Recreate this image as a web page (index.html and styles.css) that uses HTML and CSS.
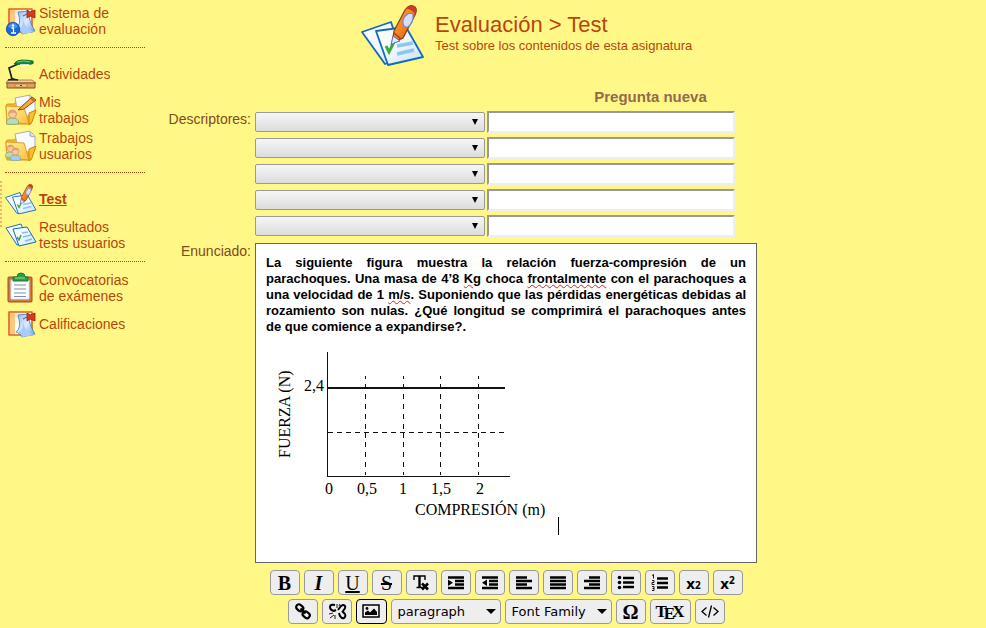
FILE: index.html
```html
<!DOCTYPE html>
<html lang="es">
<head>
<meta charset="utf-8">
<title>Evaluación &gt; Test</title>
<link rel="stylesheet" href="styles.css">
</head>
<body>
<svg class="defs" aria-hidden="true">
  <defs>
    <linearGradient id="gPaper" x1="0" y1="0" x2="1" y2="1"><stop offset="0" stop-color="#fff"/><stop offset=".5" stop-color="#eef7ff"/><stop offset="1" stop-color="#c3e2fb"/></linearGradient>
    <linearGradient id="gPen" x1="0" y1="0" x2="1" y2="1"><stop offset="0" stop-color="#ffb04a"/><stop offset=".5" stop-color="#f58220"/><stop offset="1" stop-color="#b8480c"/></linearGradient>
    <linearGradient id="gFolder" x1="0" y1="0" x2="1" y2="1"><stop offset="0" stop-color="#fff0a8"/><stop offset="1" stop-color="#fbc13a"/></linearGradient>
    <linearGradient id="gBoard" x1="0" y1="0" x2="1" y2="1"><stop offset="0" stop-color="#ffd79c"/><stop offset=".5" stop-color="#fff"/><stop offset="1" stop-color="#ffe4bd"/></linearGradient>
    <linearGradient id="gNote" x1="0" y1="0" x2="1" y2="1"><stop offset="0" stop-color="#8ab8f2"/><stop offset=".5" stop-color="#dcebff"/><stop offset="1" stop-color="#5c9ae8"/></linearGradient>
  </defs>
  <symbol id="sheets" viewBox="0 0 64 62">
    <path d="M1 28 30 18l12 36-18 6z" fill="url(#gPaper)" stroke="#1469b8" stroke-width="1.8" stroke-linejoin="round"/>
    <path d="M15 27 45 23l17 30-35 8z" fill="url(#gPaper)" stroke="#1469b8" stroke-width="1.8" stroke-linejoin="round"/>
    <path d="M36 42l16-3M36 50l17-4" stroke="#90c6f2" stroke-width="3.5" fill="none"/>
    <path d="M25 42l3 6 5-10" stroke="#35ad35" stroke-width="2.8" fill="none"/>
  </symbol>
  <symbol id="pen" viewBox="0 0 64 62">
    <path d="M33 27 44 6q5-7 10-3 3 3-1 10L42 34l-9 4-2 2z" fill="url(#gPen)" stroke="#8c3a12" stroke-width="1.2"/>
    <path d="M45 5q4-6 9-2 3 3 0 7-3-5-9-5z" fill="#cf3a22"/>
    <path d="M42 16q4-9 10-6 1 8-5 13-6 1-5-7z" fill="#d6defa" stroke="#7484c4" stroke-width="1.2"/>
    <path d="M32 32l7 5-6 2-3 2z" fill="#e7e7fa" stroke="#5b6fa6"/>
    <path d="M33 29l7 6" stroke="#9c4210" stroke-width="1.5"/>
  </symbol>
  <symbol id="sheets-small" viewBox="0 0 32 26">
    <path d="M1 6 16 2l7 17-11 4z" fill="url(#gPaper)" stroke="#1a70bd"/>
    <path d="M8 7l14-2 9 15-17 4z" fill="url(#gPaper)" stroke="#1469b8"/>
    <path d="M17 11l6-1M18 15l8-2M20 19l7-2" stroke="#86bbea" stroke-width="1.5"/>
    <path d="M12 15l2 3 2-5" stroke="#35ad35" stroke-width="1.5" fill="none"/>
  </symbol>
  <symbol id="folder" viewBox="0 0 32 32">
    <path d="M1 12q0-2 2-2h6l2-2h6l2 4h10v6l-3 12H2z" fill="#f5b931" stroke="#d9941a"/>
    <path d="M10 4l15-3 5 5v14l-16 4z" fill="#f8faff" stroke="#a9adb8"/>
    <path d="M25 1v5l5 1" fill="#d7e1f4" stroke="#a9adb8"/>
    <path d="M1 12l18 1 5 17-22-2z" fill="url(#gFolder)" stroke="#e0a020"/>
    <path d="M24 19l7-3-4 12-3 3z" fill="#fbbd31" stroke="#cf8710"/>
  </symbol>
  <symbol id="board" viewBox="0 0 32 32">
    <path d="M4 4h23v23H4z" fill="url(#gBoard)" stroke="#d9641a" stroke-width="1.6" stroke-linejoin="round"/>
    <path d="M5 5h5v21H5z" fill="#ffc680"/>
    <path d="M13 7l11-1q-1 9 6 20l-13 3q0-3-6-5 6-4 2-17z" fill="url(#gNote)" stroke="#3e79c7" stroke-width=".8"/>
    <path d="M11 24q7 0 7-9 3 10 12 12l-13 2q0-4-6-5z" fill="#a8ccf8"/>
    <path d="M22 5l3 2 5-2v8l-5-2-3 2z" fill="#d93b1b" stroke="#9a1c0d" stroke-width=".8"/>
    <path d="M22 9l-4 2" stroke="#555"/>
  </symbol>
  <symbol id="info" viewBox="0 0 32 32">
    <circle cx="8" cy="24" r="6.700" fill="#1769dc" stroke="#0b47a5" stroke-width=".8"/>
    <path d="M3 22q2-4 5-4t5 4q-5 2-10 0z" fill="#4f93f2"/>
    <circle cx="8" cy="20.500" r="1.200" fill="#fff"/><path d="M6.500 23H8.500v5M6 28h5" stroke="#fff" stroke-width="1.300" fill="none"/>
  </symbol>
  <symbol id="lamp" viewBox="0 0 32 32">
    <path d="M3 22h24l4 3H1z" fill="#f6d09c" stroke="#a7652a" stroke-width=".8"/>
    <path d="M2 25h28v5H2z" fill="#dda05e" stroke="#8d501e"/>
    <path d="M10 26h12v3H10z" fill="#f3c78b" stroke="#a7652a" stroke-width=".6"/><path d="M15 27.500h2" stroke="#713b0b"/>
    <path d="M13 6 4 10l3 11" fill="none" stroke="#18242b" stroke-width="1.700"/>
    <path d="M3 22q4-3 10 0z" fill="#18242b" stroke="#18242b"/>
    <path d="M9 6q2-4 8-4t11 1q1 3-1 3-9 1-18 0z" fill="#14883b" stroke="#086029" stroke-width=".8"/>
    <path d="M12 4q7-2 13 0" stroke="#6dce87" fill="none"/>
    <path d="M15 7h9" stroke="#fff" stroke-width="1.500"/>
  </symbol>
  <symbol id="person" viewBox="0 0 12 16">
    <path d="M0 15v-3q1-3 6-3t6 3v3q-6 1-12 0z" fill="currentColor" stroke="#6f9278" stroke-width=".6"/>
    <circle cx="6" cy="5" r="4" fill="#f9c9a0" stroke="#d08a58" stroke-width=".7"/>
    <path d="M2 5q0-4 4-4t4 4Q7 2 2 5z" fill="#e8a068"/>
  </symbol>
  <symbol id="clip" viewBox="0 0 32 32">
    <rect x="3" y="5" width="24" height="25" rx="1" fill="#cf7a42" stroke="#a04c1c"/>
    <path d="M6 8h18v19H6z" fill="#fff" stroke="#d5e0f5"/>
    <path d="M9 13h12M9 17h12M9 21h12M9 24.500h12" stroke="#7f8cab" stroke-width="1.200"/>
    <path d="M8 9V5h4q0-4 4-4t4 4h3v4z" fill="#2ba044" stroke="#167c2d"/><path d="M10 6h10" stroke="#94dd9c"/>
  </symbol>
</svg>

<div class="page">
  <nav class="side" aria-label="Evaluación">
    <ul>
      <li><a href="#"><svg class="ico" viewBox="0 0 32 32"><use href="#board"/><use href="#info"/></svg><span>Sistema de<br>evaluación</span></a></li>
    </ul>
    <hr>
    <ul>
      <li><a href="#"><svg class="ico"><use href="#lamp"/></svg><span>Actividades</span></a></li>
      <li><a href="#"><svg class="ico" viewBox="0 0 32 32"><use href="#folder"/><path d="M15 14 27 3l4 3-12 9-6 1z" fill="#f7a83c" stroke="#894d12"/><path d="M26 4l3 3" stroke="#d74f37" stroke-width="1.500"/><use class="green" href="#person" x="1" y="15" width="13" height="16"/></svg><span>Mis<br>trabajos</span></a></li>
      <li><a href="#"><svg class="ico" viewBox="0 0 32 32"><use href="#folder"/><use class="green" href="#person" x="0" y="14" width="11" height="14"/><use class="blue" href="#person" x="5" y="17" width="11" height="14"/></svg><span>Trabajos<br>usuarios</span></a></li>
    </ul>
    <hr>
    <ul>
      <li class="current"><a href="#" aria-current="page"><svg class="ico" viewBox="0 0 64 62"><use href="#sheets"/><use href="#pen"/></svg><span>Test</span></a></li>
      <li><a href="#"><svg class="ico"><use href="#sheets-small"/></svg><span>Resultados<br>tests usuarios</span></a></li>
    </ul>
    <hr>
    <ul>
      <li><a href="#"><svg class="ico"><use href="#clip"/></svg><span>Convocatorias<br>de exámenes</span></a></li>
      <li><a href="#"><svg class="ico"><use href="#board"/></svg><span>Calificaciones</span></a></li>
    </ul>
  </nav>

  <main>
    <header>
      <svg class="big" viewBox="0 0 64 62"><use href="#sheets"/><use href="#pen"/></svg>
      <div class="titles">
        <h1>Evaluación &gt; Test</h1>
        <p>Test sobre los contenidos de esta asignatura</p>
      </div>
    </header>
    <h2>Pregunta nueva</h2>

    <form>
      <label class="name" for="d1">Descriptores:</label>
      <div class="rows">
        <div class="pair"><span class="drop"><select id="d1"><option></option></select></span><input type="text" aria-label="Descriptor 1"></div>
        <div class="pair"><span class="drop"><select aria-label="Descriptor 2"><option></option></select></span><input type="text" aria-label="Descriptor 2"></div>
        <div class="pair"><span class="drop"><select aria-label="Descriptor 3"><option></option></select></span><input type="text" aria-label="Descriptor 3"></div>
        <div class="pair"><span class="drop"><select aria-label="Descriptor 4"><option></option></select></span><input type="text" aria-label="Descriptor 4"></div>
        <div class="pair"><span class="drop"><select aria-label="Descriptor 5"><option></option></select></span><input type="text" aria-label="Descriptor 5"></div>
      </div>

      <span class="name" id="enun">Enunciado:</span>
      <div class="compose">
        <div class="editor" contenteditable="true" spellcheck="false" role="textbox" aria-multiline="true" aria-labelledby="enun">
          <p>La siguiente figura muestra la relación fuerza-compresión de un parachoques. Una masa de 4’8 <u>Kg</u> choca <u>frontalmente</u> con el parachoques a una velocidad de 1 <u>m/s</u>. Suponiendo que las pérdidas energéticas debidas al rozamiento son nulas. ¿Qué longitud se comprimirá el parachoques antes de&nbsp;que comience a expandirse?.</p>
          <div class="figure"><svg class="chart" width="292" height="190" viewBox="266 345 292 190" role="img" aria-label="Fuerza frente a compresión">
            <g fill="none" stroke="#111" shape-rendering="crispEdges">
              <path d="M327.500 352V476.500H510"/>
              <path d="M328 387.500H505" stroke-width="2"/>
              <path d="M328 432.500H505" stroke-dasharray="5 4"/>
              <path d="M365.500 376V476M403.500 376V476M440.500 376V476M478.500 376V476" stroke-dasharray="3 5 5 5 5 5 5 5 5 5 5 4 5 4 5 5 5 5 5 5"/>
            </g>
            <g class="labels">
              <text x="304" y="391">2,4</text>
              <text x="325" y="494">0</text><text x="357" y="494">0,5</text><text x="399" y="494">1</text><text x="431" y="494">1,5</text><text x="476" y="494">2</text>
              <text x="415" y="515">COMPRESIÓN (m)</text>
              <text transform="translate(290 458) rotate(-90)">FUERZA (N)</text>
            </g>
          </svg><span class="caret"></span></div>
        </div>

        <div class="tools" role="toolbar" aria-label="Formato">
          <div class="bar">
            <button type="button" class="serif"><b>B</b></button>
            <button type="button" class="serif"><b><i>I</i></b></button>
            <button type="button" class="serif under">U</button>
            <button type="button" class="serif strike">S</button>
            <button type="button" class="wide" aria-label="Quitar formato"><svg viewBox="0 0 20 17"><path d="M3 6V2h11v4M5.500 13.500h6" fill="none" stroke="#000" stroke-width="1.400"/><path d="M8.500 2v11" stroke="#000" stroke-width="2.400"/><path d="M11 9.500l6 6M17 9.500l-6 6" stroke="#000" stroke-width="2.600"/></svg></button>
            <button type="button" aria-label="Aumentar sangría"><svg viewBox="0 0 20 17"><path d="M2 3.500h16M9 7h9M9 10.500h9M2 14h16" stroke="#000" stroke-width="2.300"/><path d="M2 5.500l5 3.300-5 3.300z"/></svg></button>
            <button type="button" aria-label="Reducir sangría"><svg viewBox="0 0 20 17"><path d="M2 3.500h16M9 7h9M9 10.500h9M2 14h16" stroke="#000" stroke-width="2.300"/><path d="M7 5.500L2 8.800l5 3.300z"/></svg></button>
            <button type="button" aria-label="Izquierda"><svg viewBox="0 0 20 17"><path d="M2 3.500h11M2 7h16M2 10.500h11M2 14h16" stroke="#000" stroke-width="2.300"/></svg></button>
            <button type="button" aria-label="Justificar"><svg viewBox="0 0 20 17"><path d="M2 3.500h16M2 7h16M2 10.500h16M2 14h16" stroke="#000" stroke-width="2.300"/></svg></button>
            <button type="button" aria-label="Derecha"><svg viewBox="0 0 20 17"><path d="M7 3.500h11M2 7h16M7 10.500h11M2 14h16" stroke="#000" stroke-width="2.300"/></svg></button>
            <button type="button" aria-label="Lista"><svg viewBox="0 0 20 17"><path d="M7 4h11M7 8.500h11M7 13h11" stroke="#000" stroke-width="2.500"/><circle cx="3.500" cy="3.500" r="1.800"/><circle cx="3.500" cy="8.500" r="1.800"/><circle cx="3.500" cy="13.500" r="1.800"/></svg></button>
            <button type="button" aria-label="Lista numerada"><svg viewBox="0 0 20 17"><path d="M7 4.500h11M7 9h11M7 13.500h11" stroke="#000" stroke-width="2.500"/><path d="M2 1.500l1.500-1v4M2 6.500h2v2H2v2h2.500M2 12.500h2v4H2M2.500 14.500H4" fill="none" stroke="#000" stroke-width=".9"/></svg></button>
            <button type="button" class="script">x<small class="low">2</small></button>
            <button type="button" class="script">x<small class="high">2</small></button>
          </div>
          <div class="bar">
            <button type="button" aria-label="Enlace"><svg viewBox="0 0 20 17"><g fill="none" stroke="#000" stroke-width="2.200"><rect x="3" y="2" width="7.500" height="5.500" rx="2.700" transform="rotate(40 6.700 4.700)"/><rect x="9.500" y="9" width="7.500" height="5.500" rx="2.700" transform="rotate(40 13.200 11.700)"/><path d="M7.500 5.500l5 5"/></g></svg></button>
            <button type="button" aria-label="Quitar enlace"><svg viewBox="0 0 20 17"><g fill="none" stroke="#000" stroke-width="2"><path d="M8 2Q3 1 3 4t4 4l2-1"/><path d="M11 7l3-4q3-2 4 0t-2 5"/><path d="M12 10l1 3q2 3 4 2t1-4l-3-3"/></g><path d="M2 11l4-1M3 15l4-3M8 16v-4M10 1v4M13 1l-1 2" stroke="#000" stroke-width=".9" fill="none"/></svg></button>
            <button type="button" class="active wide" aria-label="Imagen"><svg viewBox="0 0 20 17"><path d="M2 2h16v12H2z" fill="none" stroke="#000" stroke-width="1.500"/><path d="M4 12V9.500l3-2 2 2 4-4 3 3.500v3z"/><circle cx="6" cy="5.500" r="1.400"/></svg></button>
            <span class="drop style para"><select aria-label="Formato de párrafo"><option>paragraph</option></select></span>
            <span class="drop style font"><select aria-label="Tipo de letra"><option>Font Family</option></select></span>
            <button type="button" class="omega">Ω</button>
            <button type="button" class="tex">T<span>E</span>X</button>
            <button type="button" aria-label="Código"><svg viewBox="0 0 20 17"><path d="M6.500 4.500L2 8.500l4.500 4M13.500 4.500l4.500 4-4.500 4M11.500 2.500l-3 12" fill="none" stroke="#000" stroke-width="1.300"/></svg></button>
          </div>
        </div>
      </div>
    </form>
  </main>
</div>
</body>
</html>
```
FILE: styles.css
```css
* { box-sizing: border-box; }
body {
  margin: 0;
  background: #fff886;
  color: #b8450f;
  font: 14px/16px "Liberation Sans", Arial, sans-serif;
}
.defs { position: absolute; width: 0; height: 0; }
.page { display: flex; align-items: flex-start; }

.side { flex: none; width: 145px; padding: 5px 0 0 5px; }
.side ul { list-style: none; margin: 0; padding: 0; display: grid; gap: 4px; }
.side a { display: flex; align-items: center; gap: 2px; min-height: 32px; color: inherit; text-decoration: none; }
.side hr { margin: 10px 0; border: 0; border-top: 1px dotted #b8450f; }
.ico { flex: none; width: 32px; height: 32px; }
.green { color: #b4dfae; }
.blue { color: #a3cdf3; }
.current { position: relative; }
.current span { font-weight: bold; text-decoration: underline; }
.current::before {
  content: "";
  position: absolute;
  left: -5px;
  top: -2px;
  height: 46px;
  border-left: 2px dotted #f0b470;
}

main { flex: 1; min-width: 0; }
header { display: flex; gap: 10px; padding: 4px 0 0 216px; }
.big { flex: none; width: 64px; height: 62px; }
.titles { padding-top: 8px; }
h1 { margin: 0; font-size: 22px; line-height: 26px; font-weight: normal; }
header p { margin: 0; font-size: 13px; }
h2 { margin: 23px 0 6px; padding-left: 170px; text-align: center; font-size: 15px; line-height: 16px; color: #93694f; }

form { display: grid; grid-template-columns: 106px minmax(0, 502px); gap: 6px 4px; }
.name { text-align: right; color: #804a22; }
.rows { display: grid; gap: 4px; }
.pair { display: flex; align-items: center; gap: 2px; height: 22px; }
.drop { position: relative; display: block; flex: 0 1 230px; }
.drop select {
  display: block;
  width: 100%;
  height: 20px;
  appearance: none;
  border: 1px solid #999;
  border-radius: 2px;
  background: linear-gradient(#f6f6f6, #dcdcdc);
}
.drop::after {
  content: "";
  position: absolute;
  right: 7px;
  top: 7px;
  border: solid transparent;
  border-width: 6px 3px 0;
  border-top-color: #000;
  pointer-events: none;
}
.pair input { flex: 0 1 248px; min-width: 0; height: 22px; border: 2px solid; border-color: #999 #eee #eee #999; background: #fff; }

.editor {
  min-height: 320px;
  padding: 11px 10px;
  border: 1px solid #666;
  background: #fff;
  color: #000;
  outline: 0;
}
.editor p { margin: 0 0 10px; font-size: 13px; font-weight: bold; text-align: justify; }
.editor u { text-decoration: underline wavy #e02020 1px; text-underline-offset: 1px; }
.figure { display: flex; align-items: flex-end; }
.chart { display: block; flex: none; }
.labels { font: 16px "Liberation Serif", serif; fill: #000; }
.caret { width: 1px; height: 18px; background: #000; }

.tools { display: grid; gap: 4px; margin-top: 7px; }
.bar { display: flex; justify-content: center; gap: 4px; }
button {
  display: flex;
  align-items: center;
  justify-content: center;
  width: 30px;
  height: 25px;
  padding: 0;
  border: 1px solid #999;
  border-radius: 4px;
  background: #eee;
  color: #000;
}
.wide { width: 31px; }
button svg { width: 20px; height: 17px; }
.serif { font: 20px/20px "Liberation Serif", serif; }
.under { text-decoration: underline; }
.strike { text-decoration: line-through; }
.active { border-color: #000; }
.script { font: bold 15px/16px "Noto Sans", sans-serif; }
.script small { font-size: 10px; line-height: 12px; }
.low { align-self: flex-end; padding-bottom: 3px; }
.high { align-self: flex-start; padding-top: 3px; }
.omega { font: bold 20px/20px "Liberation Serif", serif; }
.tex { width: 41px; font: bold 17px/20px "Liberation Serif", serif; }
.tex span { margin: 4px -3px 0; }
.style.para { flex-basis: 110px; }
.style.font { flex-basis: 107px; }
.style select { height: 25px; padding: 0 6px; border-radius: 4px; background: #eee; color: #000; font: 13px "DejaVu Sans", sans-serif; }
.style::after { right: 5px; top: 10px; border-width: 5px 5px 0; border-top-color: #000; }
```
